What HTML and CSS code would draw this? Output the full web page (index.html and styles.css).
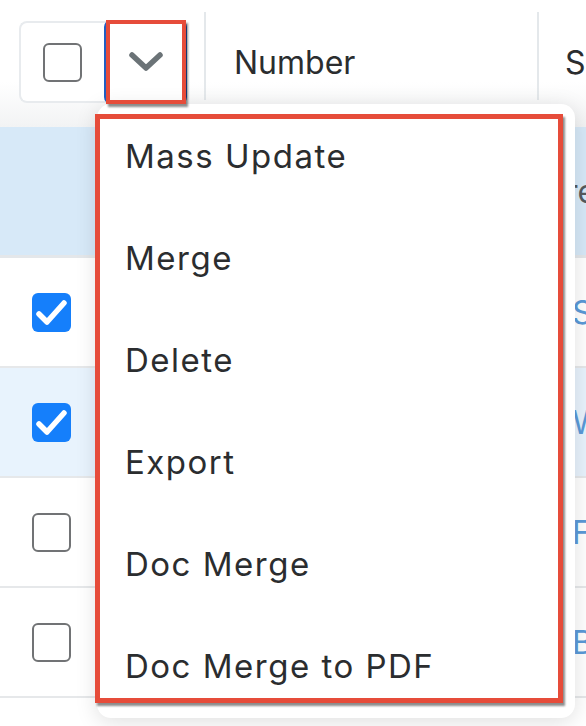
FILE: index.html
```html
<!DOCTYPE html>
<html>
<head>
<meta charset="utf-8">
<link rel="stylesheet" href="styles.css">
</head>
<body>
<div class="page">
  <div class="header">
    <div class="hcell-select">
      <div class="select-group">
        <span class="cb"></span>
      </div>
      <div class="chev-btn">
        <svg width="36" height="22" viewBox="0 0 36 22"><polyline points="4,4 18,17 32,4" fill="none" stroke="#6b7377" stroke-width="5.5" stroke-linecap="round" stroke-linejoin="round"/></svg>
      </div>
    </div>
    <div class="hdiv"></div>
    <div class="hcell hcell-num">Number</div>
    <div class="hdiv"></div>
    <div class="hcell hcell-s">S</div>
  </div>
  <div class="band"><span class="band-text">re</span></div>
  <div class="row">
    <span class="cb checked"><svg width="39" height="39" viewBox="0 0 39 39"><polyline points="7,21 15,29 32,10" fill="none" stroke="#fff" stroke-width="5.5" stroke-linecap="round" stroke-linejoin="round"/></svg></span>
    <span class="val">S</span>
  </div>
  <div class="row row-sel">
    <span class="cb checked"><svg width="39" height="39" viewBox="0 0 39 39"><polyline points="7,21 15,29 32,10" fill="none" stroke="#fff" stroke-width="5.5" stroke-linecap="round" stroke-linejoin="round"/></svg></span>
    <span class="val">W</span>
  </div>
  <div class="row">
    <span class="cb"></span>
    <span class="val">F</span>
  </div>
  <div class="row">
    <span class="cb"></span>
    <span class="val">B</span>
  </div>

  <div class="menu">
    <div class="menu-item">Mass Update</div>
    <div class="menu-item">Merge</div>
    <div class="menu-item">Delete</div>
    <div class="menu-item">Export</div>
    <div class="menu-item">Doc Merge</div>
    <div class="menu-item">Doc Merge to PDF</div>
  </div>

  <div class="mark mark-chev"></div>
  <div class="mark mark-menu"></div>
</div>
</body>
</html>
```
FILE: styles.css
```css
html, body {
  margin: 0;
  padding: 0;
  background: #ffffff;
}
.page {
  position: relative;
  width: 586px;
  height: 726px;
  overflow: hidden;
  font-family: Inter, "Noto Sans", sans-serif;
  color: #2b2d2f;
}
.header {
  display: flex;
  height: 127px;
  background: linear-gradient(#ffffff 0, #ffffff 82px, #f2f3f4 127px);
}
.hcell-select {
  width: 204px;
  flex: none;
  display: flex;
  align-items: flex-start;
  padding-top: 20px;
  padding-left: 19px;
  box-sizing: border-box;
}
.select-group {
  width: 88px;
  height: 82px;
  margin-top: 1px;
  box-sizing: border-box;
  border: 2px solid #e8ebee;
  border-right: none;
  border-radius: 8px 0 0 8px;
  display: flex;
  align-items: center;
  padding-left: 22px;
  background: #fff;
}
.chev-btn {
  width: 83px;
  height: 84px;
  margin-left: -3px;
  box-sizing: border-box;
  border: 2px solid #1f5fc4;
  border-radius: 7px;
  background: #fff;
  display: flex;
  align-items: center;
  justify-content: center;
}
.hdiv {
  width: 2px;
  flex: none;
  margin-top: 12px;
  height: 88px;
  background: #e4e8eb;
}
.hcell {
  font-size: 32px;
  line-height: 40px;
  padding-top: 43px;
  box-sizing: border-box;
}
.hcell-num {
  width: 331px;
  flex: none;
  padding-left: 28px;
}
.hcell-s {
  padding-left: 26px;
}
.cb {
  display: block;
  flex: none;
  width: 39px;
  height: 39px;
  box-sizing: border-box;
  border: 2px solid #717375;
  border-radius: 6px;
  background: #fff;
}
.cb.checked {
  border: none;
  background: #157ffb;
}
.cb svg {
  display: block;
}
.band {
  height: 128px;
  background: #d7e9f8;
  border-bottom: 3px solid #e4e7ea;
  display: flex;
  align-items: center;
}
.band-text {
  margin-left: 566px;
  font-size: 32px;
  color: #555a5e;
}
.row {
  height: 108px;
  border-bottom: 2px solid #e6e8ea;
  display: flex;
  align-items: center;
  padding-left: 32px;
}
.row-sel {
  background: #e8f3fd;
}
.val {
  margin-left: 501px;
  font-size: 32px;
  color: #5a9ad8;
}
.menu {
  position: absolute;
  left: 97px;
  top: 104px;
  width: 478px;
  height: 614px;
  padding-top: 1px;
  box-sizing: border-box;
  background: #fff;
  border-radius: 14px;
  box-shadow: 0 4px 22px rgba(0, 0, 0, 0.13);
}
.menu-item {
  height: 102px;
  display: flex;
  align-items: center;
  padding-left: 28px;
  font-size: 33px;
  letter-spacing: 1.5px;
  color: #2b2d2f;
}
.mark {
  position: absolute;
  box-sizing: border-box;
  border: 4px solid #e64c3a;
  box-shadow: 2px 3px 2px rgba(0, 0, 0, 0.45);
}
.mark-chev {
  left: 106px;
  top: 20px;
  width: 80px;
  height: 84px;
}
.mark-menu {
  left: 95px;
  top: 114px;
  width: 468px;
  height: 589px;
  border-width: 5px;
}
```
